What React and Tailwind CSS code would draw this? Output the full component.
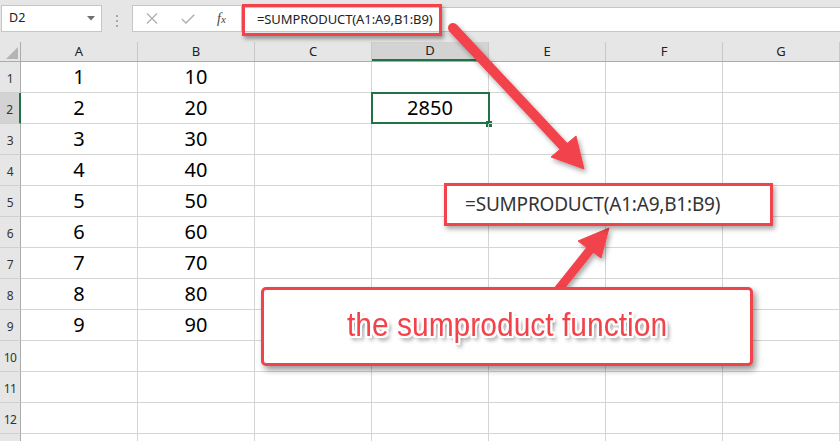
import React from "react";

const RED = "#f2434b";
const cols = ["A", "B", "C", "D", "E", "F", "G"];
const rows = Array.from({ length: 13 }, (_, i) => i + 1);

function cellValue(r, c) {
  if (r <= 9 && c === 0) return String(r);
  if (r <= 9 && c === 1) return String(r * 10);
  if (r === 2 && c === 3) return "2850";
  return "";
}

export default function App() {
  return (
    <div
      className="relative w-[840px] h-[441px] overflow-hidden bg-white"
      style={{ fontFamily: '"Noto Sans", "Open Sans", sans-serif' }}
    >
      {/* Toolbar */}
      <div className="flex items-start h-[42px] bg-[#e6e6e6]">
        <div className="ml-[1px] mt-[5px] w-[101px] h-[27px] bg-white border border-[#c6c6c6] flex items-center justify-between pl-[7px] pr-[6px]">
          <span className="text-[12.5px] text-[#222]">D2</span>
          <svg width="8" height="5" viewBox="0 0 8 5">
            <path d="M0 0 L8 0 L4 4.5 Z" fill="#6f6f6f" />
          </svg>
        </div>
        <div className="ml-[14px] mt-[15px] flex flex-col gap-[3px]">
          <div className="w-[2px] h-[2px] bg-[#a6a6a6]" />
          <div className="w-[2px] h-[2px] bg-[#a6a6a6]" />
          <div className="w-[2px] h-[2px] bg-[#a6a6a6]" />
        </div>
        <div className="ml-[14px] mt-[5px] w-[110px] h-[27px] bg-white border border-[#c6c6c6] flex items-center">
          <svg className="ml-[13px]" width="12" height="11" viewBox="0 0 12 11">
            <path d="M1 0.5 L11 10.5 M11 0.5 L1 10.5" stroke="#b3b3b3" strokeWidth="1.4" />
          </svg>
          <svg className="ml-[23px]" width="14" height="10" viewBox="0 0 14 10">
            <path d="M0.8 5 L5 9 L13.2 0.8" stroke="#b3b3b3" strokeWidth="1.6" fill="none" />
          </svg>
          <span
            className="ml-[22px] text-[14px] italic text-[#444] leading-none"
            style={{ fontFamily: '"Liberation Serif", serif' }}
          >
            f<span className="text-[11px]">x</span>
          </span>
        </div>
        <div className="mt-[7px] flex-1 h-[25px] bg-white border-t border-b border-[#c6c6c6] flex items-center pl-[15px]">
          <span className="text-[13px] text-[#222] tracking-[-0.1px]">=SUMPRODUCT(A1:A9,B1:B9)</span>
        </div>
      </div>

      {/* Column headers */}
      <div className="flex h-[20px] bg-[#e6e6e6] border-b border-[#ababab]">
        <div className="w-[21px] h-full border-r border-[#ababab] relative flex items-end justify-end pr-[2px] pb-[2px]">
          <svg width="12" height="12" viewBox="0 0 12 12">
            <path d="M12 0 L12 12 L0 12 Z" fill="#b4b4b4" />
          </svg>
        </div>
        {cols.map((c) => (
          <div
            key={c}
            className={
              "w-[117px] h-full border-r border-[#c8c8c8] flex items-center justify-center text-[13px] text-[#222] " +
              (c === "D" ? "bg-[#d3d3d3] border-b-2 border-b-[#217346]" : "")
            }
          >
            {c}
          </div>
        ))}
      </div>

      {/* Grid rows */}
      <div className="flex flex-col">
        {rows.map((r) => (
          <div key={r} className="flex h-[31px] shrink-0">
            <div
              className={
                "w-[21px] h-full border-b border-[#d0d0d0] flex items-end justify-center pb-[4px] text-[12px] tracking-[-0.5px] text-[#333] " +
                (r === 2 ? "bg-[#d3d3d3] border-r-2 border-r-[#217346]" : "bg-[#e6e6e6] border-r border-r-[#ababab]")
              }
            >
              {r <= 12 ? r : ""}
            </div>
            {cols.map((c, ci) => (
              <div
                key={c}
                className="relative w-[117px] h-full border-r border-b border-[#d4d4d4] flex items-end justify-center pb-[1px] text-[20px] leading-[28px] text-black"
              >
                {cellValue(r, ci)}
                {r === 2 && ci === 3 && (
                  <>
                    <div className="absolute left-[-1px] top-[-1px] w-[119px] h-[32px] border-2 border-[#217346]" />
                    <div className="absolute right-[-4px] bottom-[-4px] w-[6px] h-[6px] bg-[#217346]" />
                  </>
                )}
              </div>
            ))}
          </div>
        ))}
      </div>

      {/* Red box around formula bar text */}
      <div
        className="absolute left-[242px] top-[4px] w-[200px] h-[32px] border-[3px] shadow-[2px_3px_4px_rgba(0,0,0,0.35)]"
        style={{ borderColor: RED }}
      />

      {/* Arrows */}
      <svg className="absolute left-0 top-0" width="840" height="441" viewBox="0 0 840 441">
        <defs>
          <filter id="sh" x="-20%" y="-20%" width="140%" height="140%">
            <feDropShadow dx="2" dy="3" stdDeviation="2.5" floodColor="#000" floodOpacity="0.35" />
          </filter>
        </defs>
        <g filter="url(#sh)" fill={RED} stroke={RED}>
          <line x1="453" y1="28" x2="567" y2="150" strokeWidth="10" strokeLinecap="round" />
          <polygon points="584,169 551,157 576,136" strokeWidth="1" strokeLinejoin="round" />
          <line x1="550" y1="300" x2="594" y2="245" strokeWidth="9" />
          <polygon points="609,228 578,241 601,258" strokeWidth="1" strokeLinejoin="round" />
        </g>
      </svg>

      {/* Formula label box */}
      <div
        className="absolute left-[444px] top-[183px] w-[329px] h-[43px] bg-white border-[3px] flex items-center justify-start pl-[18px] shadow-[2px_3px_5px_rgba(0,0,0,0.35)]"
        style={{ borderColor: RED }}
      >
        <span className="whitespace-nowrap text-[19px] text-[#333] tracking-[-0.2px]">=SUMPRODUCT(A1:A9,B1:B9)</span>
      </div>

      {/* Callout */}
      <div
        className="absolute left-[261px] top-[287px] w-[492px] h-[79px] bg-white border-[3px] rounded-[5px] flex items-center justify-center shadow-[3px_4px_6px_rgba(0,0,0,0.4)]"
        style={{ borderColor: RED }}
      >
        <span
          className="inline-block scale-y-110 text-[30px] leading-none pb-[4px] [text-shadow:-2px_-2px_0_#fff,2px_-2px_0_#fff,-2px_2px_0_#fff,2px_2px_0_#fff,0_2px_0_#fff,0_-2px_0_#fff,2px_0_0_#fff,-2px_0_0_#fff,3px_4px_4px_rgba(0,0,0,0.55)]"
          style={{ color: RED, fontFamily: '"Liberation Sans", Arial, sans-serif' }}
        >
          the sumproduct function
        </span>
      </div>
    </div>
  );
}
